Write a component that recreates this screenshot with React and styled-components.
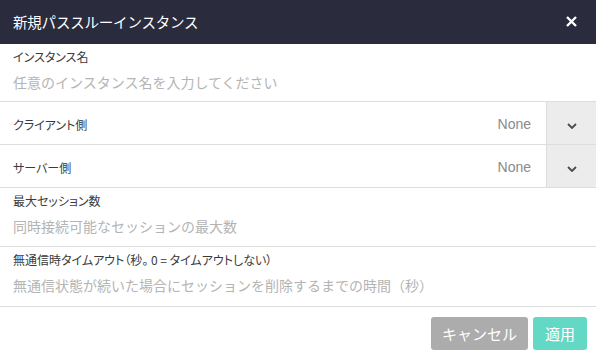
import React from 'react';
import styled, { createGlobalStyle } from 'styled-components';

const GlobalStyle = createGlobalStyle`
  html, body {
    margin: 0;
    padding: 0;
    background: #ffffff;
  }
  body {
    font-family: "Noto Sans CJK JP", "Liberation Sans", sans-serif;
    color: #333333;
  }
  * {
    box-sizing: border-box;
  }
`;

const Dialog = styled.div`
  width: 596px;
  height: 359px;
  display: flex;
  flex-direction: column;
  background: #ffffff;
  overflow: hidden;
`;

const Header = styled.div`
  height: 44px;
  flex: none;
  display: flex;
  align-items: center;
  justify-content: space-between;
  padding: 0 18px 2px 13px;
  background: #2a2b3d;
`;

const Title = styled.h1`
  margin: 0;
  font-size: 14.5px;
  font-weight: 400;
  color: #ffffff;
  letter-spacing: -0.2px;
`;

const CloseButton = styled.button`
  display: flex;
  align-items: center;
  justify-content: center;
  width: 14px;
  height: 14px;
  padding: 0;
  border: none;
  background: transparent;
  cursor: pointer;
`;

const Field = styled.div`
  display: flex;
  flex-direction: column;
  padding: 5px 13px 6px;
  border-bottom: 1px solid #dddddd;
  height: ${({ $h }) => $h}px;
`;

const Label = styled.label`
  font-size: 12px;
  line-height: 16px;
  color: #3a3a3a;
  font-feature-settings: "palt";
`;

const TextInput = styled.input`
  margin-top: 3px;
  height: 28px;
  padding: 0;
  border: none;
  outline: none;
  font-family: inherit;
  font-size: 14px;
  color: #333333;
  background: transparent;
  &::placeholder {
    color: #b4b4b4;
  }
`;

const SelectRow = styled.div`
  display: flex;
  align-items: stretch;
  height: 43px;
  border-bottom: 1px solid #dddddd;
`;

const SelectLabel = styled.span`
  flex: 1;
  display: flex;
  align-items: center;
  padding: 2px 0 0 13px;
  font-size: 12px;
  color: #3a3a3a;
  font-feature-settings: "palt";
`;

const SelectValue = styled.span`
  display: flex;
  align-items: center;
  padding: 2px 15px 0 0;
  font-family: "Liberation Sans", sans-serif;
  font-size: 14px;
  color: #8a8a8a;
`;

const SelectToggle = styled.div`
  width: 50px;
  display: flex;
  align-items: center;
  justify-content: center;
  padding-top: 6px;
  background: #ececec;
  border-left: 1px solid #dddddd;
`;

const Footer = styled.div`
  flex: 1;
  display: flex;
  justify-content: flex-end;
  align-items: flex-start;
  gap: 5px;
  padding: 10px 9px 0 0;
`;

const Button = styled.button`
  height: 33px;
  padding: 0 ${({ $pad }) => $pad}px;
  border: none;
  border-radius: 3px;
  font-family: inherit;
  font-size: 15px;
  color: #ffffff;
  background: ${({ $bg }) => $bg};
  cursor: pointer;
`;

const Chevron = () => (
  <svg width="10" height="6" viewBox="0 0 10 6">
    <path d="M1 1 L5 5 L9 1" fill="none" stroke="#4a4a4a" strokeWidth="1.8" />
  </svg>
);

const CloseIcon = () => (
  <svg width="11" height="11" viewBox="0 0 11 11">
    <path d="M1 1 L10 10 M10 1 L1 10" stroke="#ffffff" strokeWidth="2.4" />
  </svg>
);

const App = () => {
  return (
    <>
      <GlobalStyle />
      <Dialog>
        <Header>
          <Title>新規パススルーインスタンス</Title>
          <CloseButton type="button" aria-label="close">
            <CloseIcon />
          </CloseButton>
        </Header>

        <Field $h={58}>
          <Label>インスタンス名</Label>
          <TextInput placeholder="任意のインスタンス名を入力してください" />
        </Field>

        <SelectRow>
          <SelectLabel>クライアント側</SelectLabel>
          <SelectValue>None</SelectValue>
          <SelectToggle>
            <Chevron />
          </SelectToggle>
        </SelectRow>

        <SelectRow>
          <SelectLabel>サーバー側</SelectLabel>
          <SelectValue>None</SelectValue>
          <SelectToggle>
            <Chevron />
          </SelectToggle>
        </SelectRow>

        <Field $h={59}>
          <Label>最大セッション数</Label>
          <TextInput placeholder="同時接続可能なセッションの最大数" />
        </Field>

        <Field $h={60}>
          <Label>無通信時タイムアウト（秒。 0 = タイムアウトしない）</Label>
          <TextInput placeholder="無通信状態が続いた場合にセッションを削除するまでの時間（秒）" />
        </Field>

        <Footer>
          <Button type="button" $bg="#acacac" $pad={11}>
            キャンセル
          </Button>
          <Button type="button" $bg="#63d8c5" $pad={12}>
            適用
          </Button>
        </Footer>
      </Dialog>
    </>
  );
};

export default App;
